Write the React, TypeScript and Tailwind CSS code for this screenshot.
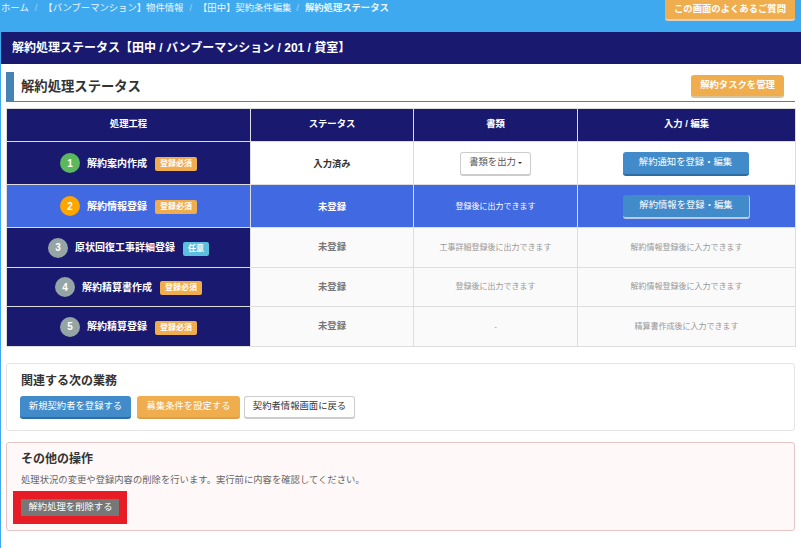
const FONT = "font-['Liberation_Sans','Noto_Sans_CJK_JP',sans-serif]";

type Step = {
  no: number;
  name: string;
  badge: string;
  circle: string;
  status: string;
  doc: string;
  input: string;
  h: string;
};

const steps: Step[] = [
  { no: 3, name: '原状回復工事詳細登録', badge: '任意', circle: 'bg-[#95a5a6]', status: '未登録', doc: '工事詳細登録後に出力できます', input: '解約情報登録後に入力できます', h: 'h-[40px]' },
  { no: 4, name: '解約精算書作成', badge: '登録必須', circle: 'bg-[#95a5a6]', status: '未登録', doc: '登録後に出力できます', input: '解約情報登録後に入力できます', h: 'h-[39px]' },
  { no: 5, name: '解約精算登録', badge: '登録必須', circle: 'bg-[#95a5a6]', status: '未登録', doc: '-', input: '精算書作成後に入力できます', h: 'h-[40px]' },
];

const StepLabel = ({ no, name, badge, circle }: { no: number; name: string; badge: string; circle: string }) => (
  <div className="flex items-center justify-center">
    <span className={`flex h-5 w-5 items-center justify-center rounded-full text-[10px] font-bold text-white ${circle}`}>{no}</span>
    <span className="ml-[7px] text-[10px] font-bold text-white">{name}</span>
    <span className={`mt-[2px] ml-2 rounded-[2px] px-[5px] py-[2px] text-[8px] leading-[10px] font-bold text-white ${badge === '任意' ? 'bg-[#5bc0de]' : 'bg-[#f0ad4e]'}`}>{badge}</span>
  </div>
);

const th = 'border border-[#dddddd] bg-[#191970] text-center text-[9.33px] font-bold text-white';
const td = 'border border-[#dddddd] text-center';
const btn = 'inline-block rounded-[3px] border-b-2 text-[9.33px] text-white';

export default function App() {
  return (
    <div className={`min-h-[548px] overflow-hidden bg-[#3fa9f0] pl-px ${FONT}`}>
      {/* breadcrumb */}
      <div className="flex h-8 items-start justify-between pr-[6px]">
        <div className="flex pt-[2px] text-[9.33px] leading-[13px] text-white/90">
          <span>ホーム</span>
          <span className="mx-[6px] text-white/50">/</span>
          <span>【バンブーマンション】物件情報</span>
          <span className="mx-[6px] text-white/50">/</span>
          <span>【田中】契約条件編集</span>
          <span className="ml-[5px] mr-[6px] text-white/50">/</span>
          <span className="font-bold">解約処理ステータス</span>
        </div>
        <button className="flex h-[21px] w-[130px] items-start justify-center rounded-b-[3px] border-b-2 border-[#d9d0c0] bg-[#f0ad4e] pt-[2px] text-[9.33px] leading-[14px] font-bold text-white">
          この画面のよくあるご質問
        </button>
      </div>

      <div className="flex h-8 items-center bg-[#191970] pl-[11px] text-[12px] font-bold text-white">
        解約処理ステータス【田中 / バンブーマンション / 201 / 貸室】
      </div>

      <div className="min-h-[484px] bg-white px-[5px] pt-2">
        {/* section heading */}
        <div className="flex h-[30px] w-[789px] items-center justify-between border-b border-l-[8px] border-[#4682b4] pl-[7px] pr-[11px]">
          <h2 className="text-[13.33px] font-bold text-[#333333]">解約処理ステータス</h2>
          <button className="h-[23px] w-[93px] rounded-[3px] border-b-2 border-[#d9c49c] bg-[#f0ad4e] text-[9.33px] font-bold text-white">
            解約タスクを管理
          </button>
        </div>

        <table className="mt-[6px] w-[789px] table-fixed border-collapse">
          <colgroup>
            <col className="w-[244px]" />
            <col className="w-[163px]" />
            <col className="w-[164px]" />
            <col className="w-[218px]" />
          </colgroup>
          <thead>
            <tr className="h-[33px]">
              <th className={th}>処理工程</th>
              <th className={th}>ステータス</th>
              <th className={th}>書類</th>
              <th className={th}>入力 / 編集</th>
            </tr>
          </thead>
          <tbody>
            <tr className="h-[43px]">
              <td className={`${td} bg-[#191970]`}>
                <StepLabel no={1} name="解約案内作成" badge="登録必須" circle="bg-[#5cb85c]" />
              </td>
              <td className={`${td} bg-white pt-[3px] text-[9.33px] font-bold text-[#333333]`}>入力済み</td>
              <td className={`${td} bg-white pb-[2px]`}>
                <button className="h-[24px] w-[71px] rounded-[3px] border border-b-2 border-[#cccccc] bg-white text-[9.33px] text-[#555555]">
                  書類を出力
                  <span className="ml-[2px] inline-block border-x-[2px] border-t-[2px] border-x-transparent border-t-[#333333] align-middle" />
                </button>
              </td>
              <td className={`${td} bg-white pr-[2px] pb-[2px]`}>
                <button className={`${btn} h-[24px] w-[126px] border-[#2e6da4] bg-[#428bca]`}>解約通知を登録・編集</button>
              </td>
            </tr>
            <tr className="h-[43px] bg-[#4169e1]">
              <td className={td}>
                <StepLabel no={2} name="解約情報登録" badge="登録必須" circle="bg-[#ffa500]" />
              </td>
              <td className={`${td} pt-[3px] text-[9.33px] font-bold text-white`}>未登録</td>
              <td className={`${td} pt-px text-[8px] text-white`}>登録後に出力できます</td>
              <td className={`${td} pb-[2px]`}>
                <button className={`${btn} h-[24px] w-[127px] border-r border-[#b8c8e6] bg-[#428bca]`}>解約情報を登録・編集</button>
              </td>
            </tr>
            {steps.map((s) => (
              <tr key={s.no} className={`${s.h} bg-[#fafafa]`}>
                <td className={`${td} bg-[#191970]`}>
                  <StepLabel no={s.no} name={s.name} badge={s.badge} circle={s.circle} />
                </td>
                <td className={`${td} pt-px text-[9.33px] font-bold text-[#777777]`}>{s.status}</td>
                <td className={`${td} text-[8px] text-[#999999]`}>{s.doc}</td>
                <td className={`${td} text-[8px] text-[#999999]`}>{s.input}</td>
              </tr>
            ))}
          </tbody>
        </table>

        {/* next tasks */}
        <div className="mt-4 h-[68px] w-[789px] rounded-[3px] border border-[#e5e5e5] px-[13px] pt-[9px]">
          <h3 className="pl-px text-[12px] leading-[16px] font-bold text-[#333333]">関連する次の業務</h3>
          <div className="mt-[7px] flex">
            <button className={`${btn} h-[23px] w-[111px] border-[#2e6da4] bg-[#428bca]`}>新規契約者を登録する</button>
            <button className={`${btn} ml-[6px] h-[23px] w-[103px] border-[#d9a050] bg-[#f0ad4e]`}>募集条件を設定する</button>
            <button className="ml-1 h-[23px] w-[111px] rounded-[3px] border border-b-2 border-[#cccccc] bg-white text-[9.33px] text-[#333333]">契約者情報画面に戻る</button>
          </div>
        </div>

        {/* other actions */}
        <div className="mt-[11px] h-[89px] w-[789px] rounded-[3px] border border-[#e6c5c5] bg-[#fff8f8] pl-[6px] pt-[8px]">
          <h3 className="pl-[8px] text-[12px] leading-[16px] font-bold text-[#333333]">その他の操作</h3>
          <p className="mt-[6px] pl-[8px] text-[9.33px] leading-[14px] text-[#666666]">処理状況の変更や登録内容の削除を行います。実行前に内容を確認してください。</p>
          <div className="mt-[4px] w-fit border-[8px] border-[#e81c24]">
            <button className="block h-[17px] w-[98px] bg-[#777777] pl-px text-[9.33px] text-white">解約処理を削除する</button>
          </div>
        </div>
      </div>
    </div>
  );
}
